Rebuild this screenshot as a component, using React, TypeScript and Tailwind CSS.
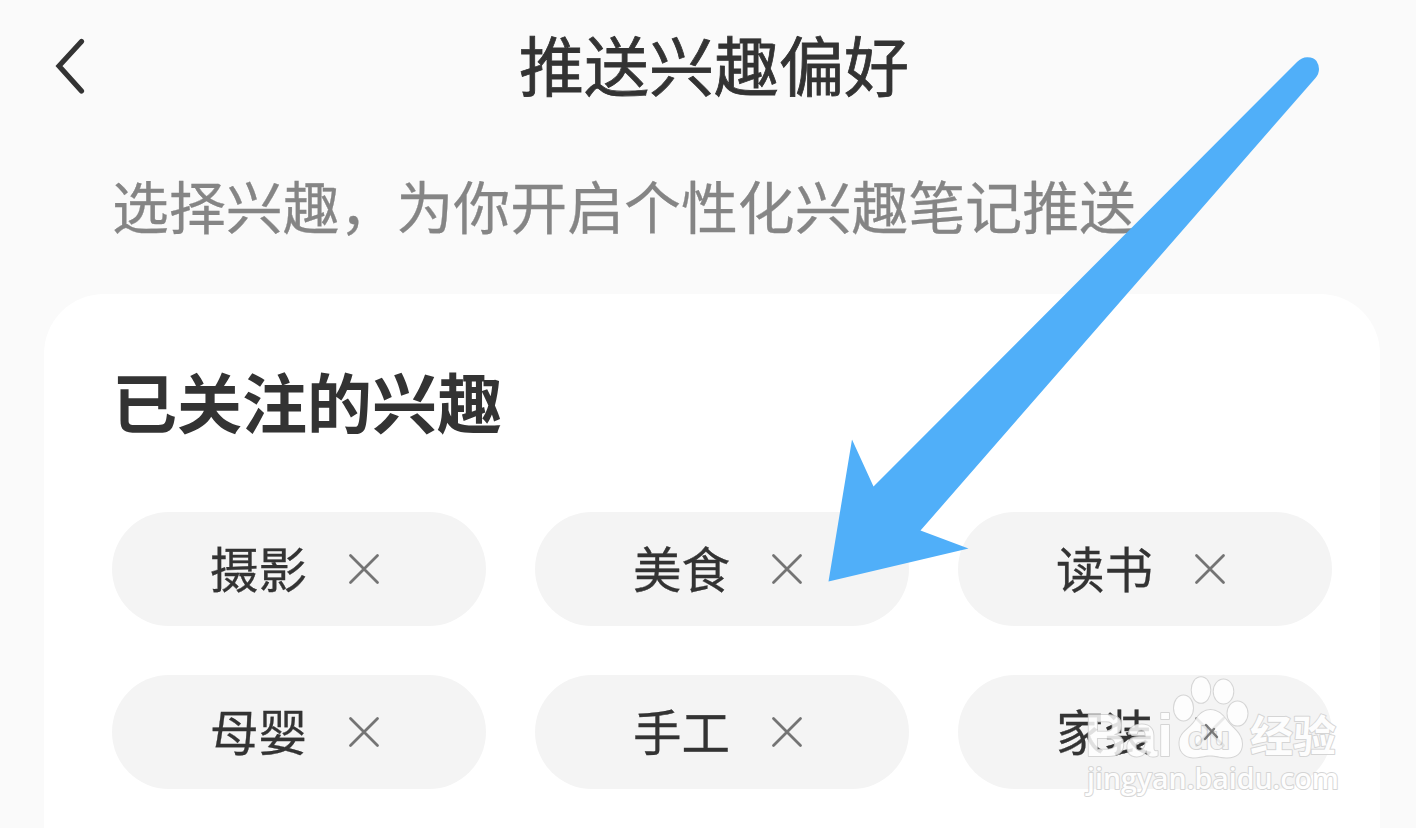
import React, { useState } from 'react';

interface InterestChipProps {
  label: string;
  onRemove: () => void;
}

const INTERESTS = ['摄影', '美食', '读书', '母婴', '手工', '家装'];

const InterestChip: React.FC<InterestChipProps> = ({ label, onRemove }) => (
  <div className="flex h-[114px] items-center justify-center gap-[33px] rounded-full bg-[#f4f4f4]">
    <span className="-mt-1 whitespace-nowrap text-[48.5px] leading-[60px] text-[#333333] [-webkit-text-stroke:0.3px_#333333]">{label}</span>
    <button onClick={onRemove} aria-label="remove" className="h-12 w-12">
      <svg className="h-12 w-12" viewBox="0 0 48 48" fill="none" stroke="#747474" strokeWidth="2.8" strokeLinecap="round">
        <path d="M10.500 10.500L37.500 37.500M37.500 10.500L10.500 37.500" />
      </svg>
    </button>
  </div>
);

const Arrow = () => (
  <svg className="pointer-events-none absolute left-0 top-0 h-[828px] w-[1416px]" viewBox="0 0 1416 828" fill="#50aff9">
    <path d="M1297 62Q1302 57 1307.500 57.200Q1314 57.200 1316.500 61Q1319 65 1319 69Q1319 74 1315.500 78L920.500 530.500L968.500 548.500L828.500 581.500L852 439.500L873.500 486.500Z" />
  </svg>
);

const Watermark = () => (
  <svg className="pointer-events-none absolute left-[1080px] top-[670px] h-[135px] w-[270px]" viewBox="1080 670 270 135">
    <g fill="white" stroke="#d0d0d0" strokeWidth="2" strokeLinejoin="round" paintOrder="stroke" opacity="0.85">
      <text x="1085" y="755.500" fontSize="59" fontWeight="700" fontFamily="Liberation Sans, sans-serif" textLength="88" lengthAdjust="spacingAndGlyphs">Bai</text>
      <ellipse cx="1183.500" cy="708" rx="9.500" ry="12.500" />
      <ellipse cx="1201" cy="690" rx="9.300" ry="12.800" />
      <ellipse cx="1223.500" cy="691.500" rx="9.800" ry="12" />
      <ellipse cx="1237.500" cy="713.500" rx="10" ry="12" />
      <path d="M1210.500 710C1218 710 1223 715 1227 721C1232 728 1242 733 1242 744C1242 753 1236 758 1226 757.500C1219 757 1216 755.500 1210 755.500C1204 755.500 1200 757.500 1193 757.500C1184 757 1179 751 1179.500 742C1180 732 1190 729 1195 721C1199 714 1204 710 1210.500 710Z" />
      <text x="1188" y="749" fontSize="32" fontWeight="700" fontFamily="Liberation Sans, sans-serif" textLength="42" lengthAdjust="spacingAndGlyphs" fill="#f6f6f6">du</text>
      <text x="1250" y="752" fontSize="43" fontWeight="700" fontFamily="Noto Sans CJK SC, sans-serif">经验</text>
      <text x="1087" y="789" fontSize="29" fontWeight="600" fontFamily="Open Sans, sans-serif" textLength="252" lengthAdjust="spacingAndGlyphs">jingyan.baidu.com</text>
    </g>
    <path d="M1206 725L1217 737M1214 729L1205 739" stroke="#555555" strokeWidth="2.4" strokeLinecap="round" opacity="0.75" />
  </svg>
);

const App: React.FC = () => {
  const [interests, setInterests] = useState(INTERESTS);

  const handleRemove = (label: string) => {
    setInterests(prev => prev.filter(item => item !== label));
  };

  return (
    <div className="relative flex h-[828px] w-[1416px] flex-col overflow-hidden bg-[#fafafa] font-['Noto_Sans_CJK_SC',sans-serif]">
      <header className="grid h-[130px] grid-cols-[120px_1fr_108px] items-center">
        <button aria-label="back" className="ml-12 h-16 w-12">
          <svg className="h-16 w-12" viewBox="0 0 48 64" fill="none" stroke="#333333" strokeWidth="5.2" strokeLinecap="round" strokeLinejoin="miter">
            <path d="M33.500 8.500L11 33L33.500 58" />
          </svg>
        </button>
        <h1 className="-mt-1 text-center text-[65px] leading-[80px] text-[#333333] [-webkit-text-stroke:0.8px_#333333]">推送兴趣偏好</h1>
      </header>

      <p className="ml-[112px] mt-[34px] h-20 whitespace-nowrap text-[56.9px] leading-[80px] text-[#858585] [-webkit-text-stroke:0.3px_#858585]">
        选择兴趣，为你开启个性化兴趣笔记推送
      </p>

      <section className="ml-11 mt-[50px] w-[1336px] flex-1 rounded-t-[60px] bg-white pl-[68px] pr-12">
        <h2 className="pt-[66px] text-[65px] font-bold leading-[80px] text-[#333333]">已关注的兴趣</h2>
        <div className="mt-[72px] grid grid-cols-3 gap-[49px]">
          {interests.map(label => (
            <InterestChip key={label} label={label} onRemove={() => handleRemove(label)} />
          ))}
        </div>
      </section>

      <Watermark />
      <Arrow />
    </div>
  );
};

export default App;
